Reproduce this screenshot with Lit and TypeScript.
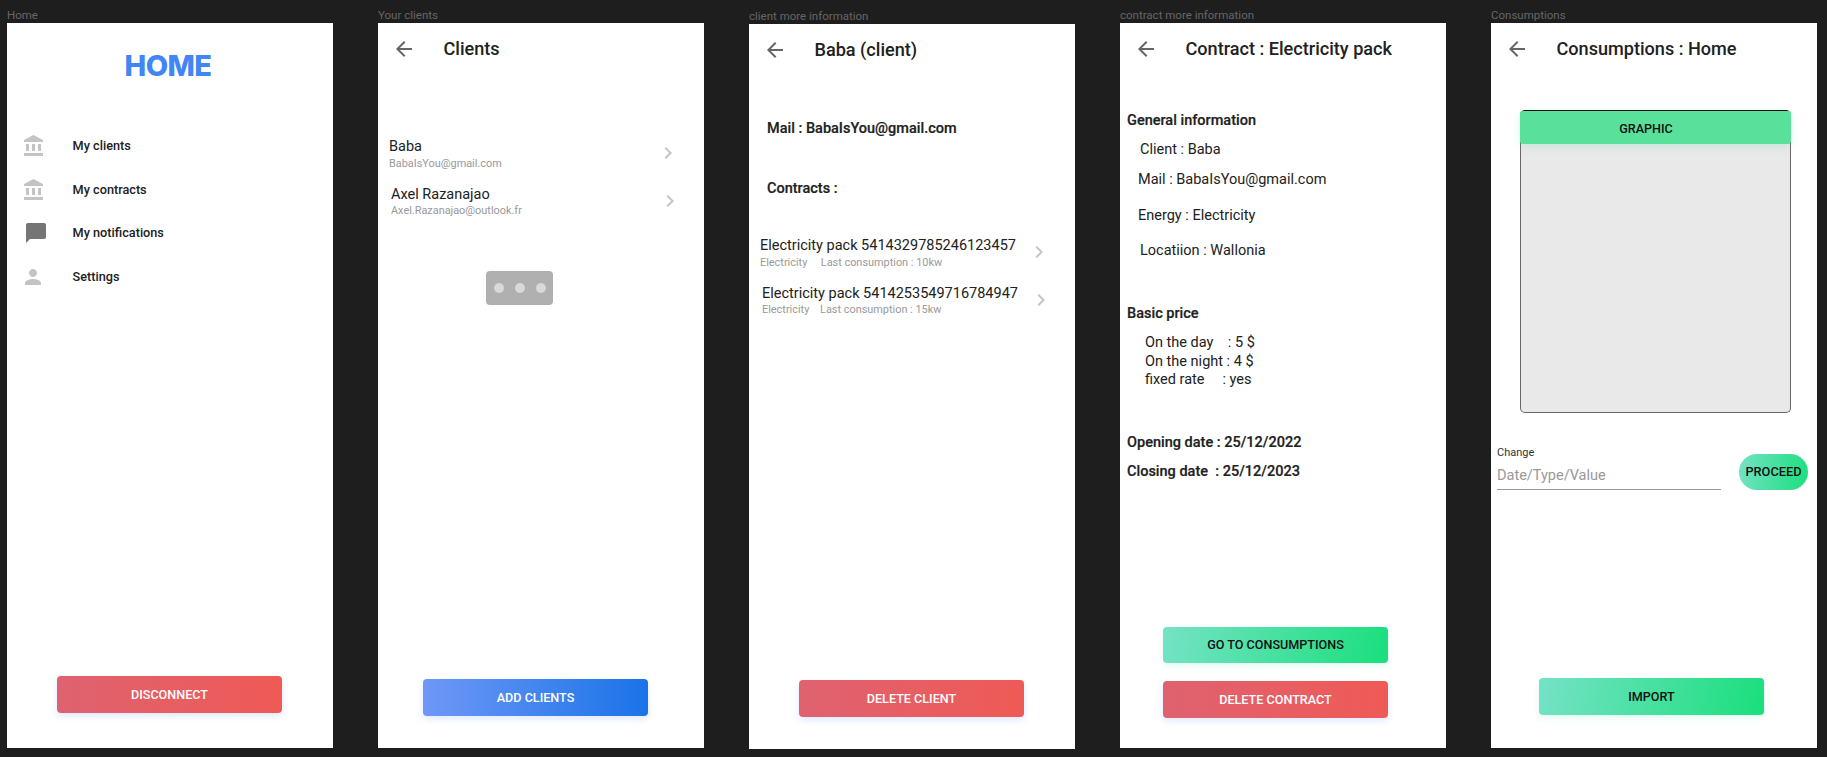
import { LitElement, html, css, svg } from "lit";
import { customElement } from "lit/decorators.js";

const bank = svg`<path d="M4 10v7h3v-7H4zm6 0v7h3v-7h-3zM2 22h19v-3H2v3zm14-12v7h3v-7h-3zm-4.5-9L2 6v2h19V6l-9.5-5z"/>`;

@customElement("app-root")
export class AppRoot extends LitElement {
  static styles = css`
    :host { display: block; width: 1827px; height: 757px; background: #1e1e1e; overflow: hidden;
      font-family: Roboto, "Liberation Sans", sans-serif; color: #212121; font-size: 14.5px; line-height: 18px; }
    .canvas { display: flex; gap: 45px; padding: 8px 0 0 7px; }
    .frame { width: 326px; display: flex; flex-direction: column; }
    .frame.low { padding-top: 1px; }
    .flabel { font-size: 11.5px; line-height: 14px; height: 15px; color: #666; white-space: nowrap; }
    .screen { height: 725px; background: #fff; display: flex; flex-direction: column; }
    .head { height: 52px; flex: none; display: flex; align-items: center; padding-left: 14px; }
    .head svg { width: 24px; height: 24px; fill: #666; flex: none; }
    .head h1 { margin: 0 0 0 27.5px; font-size: 18.1px; line-height: 24px; font-weight: 500; white-space: nowrap; }
    .logo { margin: 26px 4px 0 0; text-align: center; font-family: Inter, sans-serif; font-weight: 800;
      font-size: 29px; line-height: 34px; color: #4285f4; letter-spacing: -0.6px; }
    .menu { margin-top: 41.5px; display: flex; flex-direction: column; }
    .mi { height: 43.6px; display: flex; align-items: center; padding-left: 15px; gap: 26.6px; font-size: 12.7px; font-weight: 500; }
    .mi svg { width: 24px; height: 24px; fill: #c4c4c4; flex: none; }
    .mi svg.dark { fill: #757575; }
    .list { display: flex; flex-direction: column; gap: 15px; padding-left: 11px; }
    .list.clients { margin-top: 62px; }
    .list.contracts { margin-top: 38px; }
    .row { display: grid; grid-template-columns: 267px 24px; align-items: center; }
    .row.shift { margin-left: 2px; }
    .name { white-space: nowrap; font-size: 14.5px; line-height: 18px; padding-top: 1px; }
    .sub { margin-top: 0.5px; font-size: 10.9px; line-height: 13px; color: #999; white-space: pre; }
    .row svg { width: 24px; height: 24px; fill: #c4c4c4; }
    .more { margin: 53.5px 0 0 108px; width: 67px; height: 34px; border-radius: 4px; background: #b0b0b0;
      display: flex; align-items: center; justify-content: center; gap: 11px; }
    .more i { width: 10px; height: 10px; border-radius: 50%; background: #d9d9d9; }
    .strong { font-weight: 500; white-space: pre; -webkit-text-stroke: 0.2px #212121; }
    .mail-strong { margin: 44px 0 0 18px; }
    .contracts-title { margin: 42px 0 0 18px; }
    .t { white-space: pre; }
    .general { margin: 37px 0 0 7px; }
    .client { margin: 11px 0 0 20px; }
    .cmail { margin: 12px 0 0 18px; }
    .energy { margin: 18px 0 0 18px; }
    .location { margin: 17px 0 0 20px; }
    .basic { margin: 45px 0 0 7px; }
    .prices { margin: 11px 0 0 25px; line-height: 18.5px; }
    .opening { margin: 44px 0 0 7px; }
    .closing { margin: 11px 0 0 7px; }
    .btn { width: 225px; height: 37px; flex: none; border-radius: 4px; display: flex; align-items: center; justify-content: center;
      font-size: 12.6px; font-weight: 500; box-shadow: 0 3px 7px rgba(110, 150, 255, 0.22); }
    .red { background: linear-gradient(90deg, #df6270, #ef5a56); color: #fff; }
    .blue { background: linear-gradient(90deg, #6e98f6, #1a73e8); color: #fff; }
    .green { background: linear-gradient(100deg, #75e2c6, #1adf7c); color: #111; box-shadow: 0 3px 7px rgba(110, 230, 190, 0.2); }
    .bottom { margin-top: auto; }
    .b1 { margin-left: 50px; margin-bottom: 35px; }
    .b2 { margin-left: 45px; margin-bottom: 32px; }
    .b3 { margin-left: 50px; margin-bottom: 32px; }
    .b4a { margin-left: 43px; height: 36px; }
    .b4b { margin: 18px 0 30px 43px; }
    .b5 { margin-left: 48px; margin-bottom: 33px; }
    .graph { margin: 35px 0 0 29px; width: 271px; height: 303px; box-sizing: border-box; border: 1px solid #666;
      border-top-color: #111; border-radius: 5px; background: #e9e9e9; }
    .graph-head { margin: 0 -1px; height: 33px; background: #59e09b; border-radius: 3px; padding: 2px 19px 0 0; box-sizing: border-box;
      display: flex; align-items: center; justify-content: center; font-size: 12.6px; font-weight: 500; color: #111;
      box-shadow: 0 4px 8px rgba(89, 224, 155, 0.18); }
    .change { margin: 33px 0 0 6px; display: flex; align-items: flex-start; }
    .field { width: 224px; }
    .field label { display: block; font-size: 11px; line-height: 14px; margin-bottom: 7px; color: #333; }
    .input { padding-bottom: 4px; border-bottom: 1px solid #999; font-size: 14.5px; line-height: 18px; color: #999; }
    .proceed { margin: 8px 0 0 18px; width: 69px; height: 36px; border-radius: 18px; display: flex; align-items: center;
      justify-content: center; font-size: 12.8px; font-weight: 500; color: #111; background: linear-gradient(100deg, #75e2c6, #1adf7c); }
  `;

  private header(title: string) {
    return html`<div class="head">
      <svg viewBox="0 0 24 24"><path d="M20 11H7.83l5.59-5.59L12 4l-8 8 8 8 1.41-1.41L7.83 13H20v-2z" /></svg>
      <h1>${title}</h1>
    </div>`;
  }

  private row(name: string, sub: string, shift: boolean) {
    return html`<div class="row ${shift ? "shift" : ""}">
      <div><div class="name">${name}</div><div class="sub">${sub}</div></div>
      <svg viewBox="0 0 24 24"><path d="M10 6L8.59 7.41 13.17 12l-4.58 4.59L10 18l6-6z" /></svg>
    </div>`;
  }

  render() {
    return html`<div class="canvas">
      <section class="frame">
        <div class="flabel">Home</div>
        <div class="screen">
          <div class="logo">HOME</div>
          <div class="menu">
            <div class="mi"><svg viewBox="0 0 24 24">${bank}</svg>My clients</div>
            <div class="mi"><svg viewBox="0 0 24 24">${bank}</svg>My contracts</div>
            <div class="mi"><svg class="dark" viewBox="-2 0 24 24"><path d="M20 2H4c-1.1 0-1.99.9-1.99 2L2 22l4-4h14c1.1 0 2-.9 2-2V4c0-1.1-.9-2-2-2z" /></svg>My notifications</div>
            <div class="mi"><svg viewBox="1 0 24 24"><path d="M12 12c2.21 0 4-1.79 4-4s-1.79-4-4-4-4 1.79-4 4 1.79 4 4 4zm0 2c-2.67 0-8 1.34-8 4v2h16v-2c0-2.66-5.33-4-8-4z" /></svg>Settings</div>
          </div>
          <div class="btn red bottom b1">DISCONNECT</div>
        </div>
      </section>

      <section class="frame">
        <div class="flabel">Your clients</div>
        <div class="screen">
          ${this.header("Clients")}
          <div class="list clients">
            ${this.row("Baba", "BabaIsYou@gmail.com", false)}
            ${this.row("Axel Razanajao", "Axel.Razanajao@outlook.fr", true)}
          </div>
          <div class="more"><i></i><i></i><i></i></div>
          <div class="btn blue bottom b2">ADD CLIENTS</div>
        </div>
      </section>

      <section class="frame low">
        <div class="flabel">client more information</div>
        <div class="screen">
          ${this.header("Baba (client)")}
          <div class="strong mail-strong">Mail : BabaIsYou@gmail.com</div>
          <div class="strong contracts-title">Contracts :</div>
          <div class="list contracts">
            ${this.row("Electricity pack 5414329785246123457", "Electricity     Last consumption : 10kw", false)}
            ${this.row("Electricity pack 5414253549716784947", "Electricity    Last consumption : 15kw", true)}
          </div>
          <div class="btn red bottom b3">DELETE CLIENT</div>
        </div>
      </section>

      <section class="frame">
        <div class="flabel">contract more information</div>
        <div class="screen">
          ${this.header("Contract : Electricity pack")}
          <div class="strong general">General information</div>
          <div class="t client">Client : Baba</div>
          <div class="t cmail">Mail : BabaIsYou@gmail.com</div>
          <div class="t energy">Energy : Electricity</div>
          <div class="t location">Locatiion : Wallonia</div>
          <div class="strong basic">Basic price</div>
          <div class="t prices">On the day    : 5 $<br />On the night : 4 $<br />fixed rate     : yes</div>
          <div class="strong opening">Opening date : 25/12/2022</div>
          <div class="strong closing">Closing date  : 25/12/2023</div>
          <div class="btn green bottom b4a">GO TO CONSUMPTIONS</div>
          <div class="btn red b4b">DELETE CONTRACT</div>
        </div>
      </section>

      <section class="frame">
        <div class="flabel">Consumptions</div>
        <div class="screen">
          ${this.header("Consumptions : Home")}
          <div class="graph"><div class="graph-head">GRAPHIC</div></div>
          <div class="change">
            <div class="field">
              <label>Change</label>
              <div class="input">Date/Type/Value</div>
            </div>
            <div class="proceed">PROCEED</div>
          </div>
          <div class="btn green bottom b5">IMPORT</div>
        </div>
      </section>
    </div>`;
  }
}
